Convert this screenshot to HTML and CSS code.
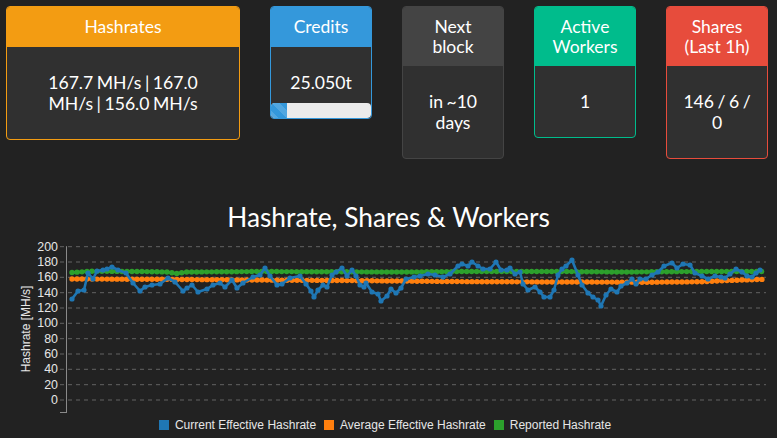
FILE: index.html
```html
<!DOCTYPE html>
<html lang="en">
<head>
<meta charset="utf-8">
<title>Dashboard</title>
<link rel="stylesheet" href="styles.css">
</head>
<body>
<div class="cards">
  <div class="card card-warning card-wide">
    <div class="card-header">Hashrates</div>
    <div class="card-body">167.7 MH/s | 167.0 MH/s | 156.0 MH/s</div>
  </div>
  <div class="card card-info">
    <div class="card-header">Credits</div>
    <div class="card-body credits-body">25.050t</div>
    <div class="progress"><div class="progress-bar" style="width:16%"></div></div>
  </div>
  <div class="card card-dark">
    <div class="card-header">Next block</div>
    <div class="card-body">in ~10 days</div>
  </div>
  <div class="card card-success">
    <div class="card-header">Active Workers</div>
    <div class="card-body">1</div>
  </div>
  <div class="card card-danger">
    <div class="card-header">Shares (Last 1h)</div>
    <div class="card-body">146 / 6 / 0</div>
  </div>
</div>

<div class="chart">
  <h2 class="chart-title">Hashrate, Shares &amp; Workers</h2>
  <svg class="chart-svg" width="777" height="182" viewBox="0 236 777 182" xmlns="http://www.w3.org/2000/svg">
    <defs>
      <marker id="mb" markerUnits="userSpaceOnUse" markerWidth="6" markerHeight="6" refX="3" refY="3" viewBox="0 0 6 6">
        <circle cx="3" cy="3" r="2.6" fill="#1f77b4"/>
      </marker>
    </defs>
    <g class="grid">
      <line x1="60" x2="766" y1="246.7" y2="246.7"/>
      <line x1="60" x2="766" y1="262" y2="262"/>
      <line x1="60" x2="766" y1="277.3" y2="277.3"/>
      <line x1="60" x2="766" y1="292.7" y2="292.7"/>
      <line x1="60" x2="766" y1="308" y2="308"/>
      <line x1="60" x2="766" y1="323.3" y2="323.3"/>
      <line x1="60" x2="766" y1="338.7" y2="338.7"/>
      <line x1="60" x2="766" y1="354" y2="354"/>
      <line x1="60" x2="766" y1="369.3" y2="369.3"/>
      <line x1="60" x2="766" y1="384.7" y2="384.7"/>
      <line x1="60" x2="766" y1="400" y2="400"/>
    </g>
    <g class="axis">
      <line x1="66.5" x2="66.5" y1="246.2" y2="413"/>
      <line x1="60" x2="67" y1="412.5" y2="412.5"/>
    </g>
    <g class="ticks">
      <text x="58" y="246.7">200</text>
      <text x="58" y="262">180</text>
      <text x="58" y="277.3">160</text>
      <text x="58" y="292.7">140</text>
      <text x="58" y="308">120</text>
      <text x="58" y="323.3">100</text>
      <text x="58" y="338.7">80</text>
      <text x="58" y="354">60</text>
      <text x="58" y="369.3">40</text>
      <text x="58" y="384.7">20</text>
      <text x="58" y="400">0</text>
    </g>
    <text class="axis-title" transform="translate(30 329) rotate(-90)">Hashrate [MH/s]</text>

    <polyline class="series s-green" points="72,272.5 90,271.3 140,271.5 168,272 176,273.6 186,272 260,271.5 400,272 470,271.5 560,271.5 620,272 700,271.5 762,271.5"/>
    <polyline class="dots d-green" points="72,272.5 90,271.3 140,271.5 168,272 176,273.6 186,272 260,271.5 400,272 470,271.5 560,271.5 620,272 700,271.5 762,271.5"/>

    <polyline class="series s-orange" points="72,279 160,279.3 250,280 350,280.6 460,281.6 560,282 650,282.2 700,281.8 720,280.8 762,279.4"/>
    <polyline class="dots d-orange" points="72,279 160,279.3 250,280 350,280.6 460,281.6 560,282 650,282.2 700,281.8 720,280.8 762,279.4"/>

    <polyline class="series s-blue" marker-start="url(#mb)" marker-mid="url(#mb)" marker-end="url(#mb)" points="72,299 78,291 84,290 88,273 93,279 97,271 103,270 107,269 112,267 118,270 126,273 133,283 140,291 145,287 152,285 160,284 168,278 175,282 183,291 187,288 192,285 198,292 207,289 213,285 220,283 225,287 232,280 237,288 243,283 253,277 260,275 265,268 270,276 277,285 282,284 290,278 300,276 306,284 311,291 314,297 318,290 323,285 327,287 332,275 336,272 342,268 347,276 352,270 356,276 360,285 364,287 366,283 372,292 378,294 381,301 387,296 391,289 396,293 401,288 406,279 414,277 420,276 428,274 435,275 443,277 450,274 458,266 462,264 468,266 472,262 478,266 483,269 490,269 496,262 501,270 507,270 510,268 515,274 520,272 523,284 528,290 535,287 540,292 544,297 550,297 554,290 558,275 562,269 566,266 572,260 578,275 582,285 588,293 593,297 598,300 601,306 606,295 611,289 617,292 621,286 627,283 632,279 636,284 640,279 646,279 652,275 658,272 664,266 672,263 677,268 683,264 690,265 695,273 702,276 708,279 715,276 721,277 725,278 730,274 736,269 742,272 747,276 752,277 756,273 760,270"/>
  </svg>
  <div class="legend">
    <span class="legend-item"><span class="swatch sw-blue"></span>Current Effective Hashrate</span>
    <span class="legend-item"><span class="swatch sw-orange"></span>Average Effective Hashrate</span>
    <span class="legend-item"><span class="swatch sw-green"></span>Reported Hashrate</span>
  </div>
</div>
</body>
</html>
```
FILE: styles.css
```css
html, body {
  margin: 0;
  padding: 0;
}
body {
  background: #222222;
  color: #ffffff;
  font-family: Lato, "Open Sans", sans-serif;
  width: 777px;
  height: 438px;
  overflow: hidden;
}
.cards {
  display: flex;
  align-items: flex-start;
  gap: 30px;
  padding: 6px 0 0 6px;
}
.card {
  width: 102px;
  box-sizing: border-box;
  border: 1px solid #444;
  border-radius: 4px;
  background: #303030;
  overflow: hidden;
  text-align: center;
}
.card-wide {
  width: 234px;
}
.card-header {
  font-size: 17.5px;
  line-height: 19.4px;
  padding: 10.3px 14px;
}
.card-body {
  font-size: 17.6px;
  line-height: 21.5px;
  padding: 24.5px 12px;
  word-spacing: -1px;
}
.card-wide .card-body {
  padding-left: 25px;
  padding-right: 25px;
}
.card-warning { border-color: #f39c12; }
.card-warning .card-header { background: #f39c12; }
.card-info { border-color: #3498db; }
.card-info .card-header { background: #3498db; }
.card-dark { border-color: #444444; }
.card-dark .card-header { background: #444444; }
.card-success { border-color: #00bc8c; }
.card-success .card-header { background: #00bc8c; }
.card-danger { border-color: #e74c3c; }
.card-danger .card-header { background: #e74c3c; }

.credits-body {
  padding-bottom: 10px;
}
.progress {
  height: 15px;
  background: #ebebeb;
  border-radius: 4px;
  overflow: hidden;
}
.progress-bar {
  height: 100%;
  background-color: #3498db;
  background-image: linear-gradient(45deg, rgba(255,255,255,.15) 25%, transparent 25%, transparent 50%, rgba(255,255,255,.15) 50%, rgba(255,255,255,.15) 75%, transparent 75%, transparent);
  background-size: 16px 16px;
}

.chart {
  margin-top: 39px;
}
.chart-title {
  margin: 0;
  font-family: Lato, "Open Sans", sans-serif;
  font-weight: 400;
  font-size: 26.3px;
  line-height: 38px;
  text-align: center;
  color: #ffffff;
}
.chart-svg {
  display: block;
}
.grid line {
  stroke: #636363;
  stroke-width: 1;
  stroke-dasharray: 4 4;
}
.axis line {
  stroke: #8a8a8a;
  stroke-width: 1;
}
.ticks text {
  font-family: "Liberation Sans", Arial, sans-serif;
  font-size: 12.4px;
  fill: #e6e6e6;
  text-anchor: end;
  dominant-baseline: central;
}
.axis-title {
  font-family: "Liberation Sans", Arial, sans-serif;
  font-size: 12px;
  fill: #e6e6e6;
  text-anchor: middle;
}
.series {
  fill: none;
  stroke-width: 2.6;
  stroke-linejoin: round;
}
.dots {
  fill: none;
  stroke-width: 5.4;
  stroke-linecap: round;
  stroke-dasharray: 0 5;
}
.s-blue { stroke: #1f77b4; }
.s-orange, .d-orange { stroke: #ff7f0e; }
.s-green, .d-green { stroke: #2ca02c; }

.legend {
  display: flex;
  justify-content: center;
  gap: 8px;
  height: 20px;
  padding-right: 7px;
  font-family: "Liberation Sans", Arial, sans-serif;
  font-size: 12px;
  line-height: 14px;
  color: #e6e6e6;
}
.legend-item {
  display: flex;
  align-items: center;
  gap: 6px;
  height: 14px;
}
.swatch {
  width: 10px;
  height: 10px;
}
.sw-blue { background: #1f77b4; }
.sw-orange { background: #ff7f0e; }
.sw-green { background: #2ca02c; }
```
